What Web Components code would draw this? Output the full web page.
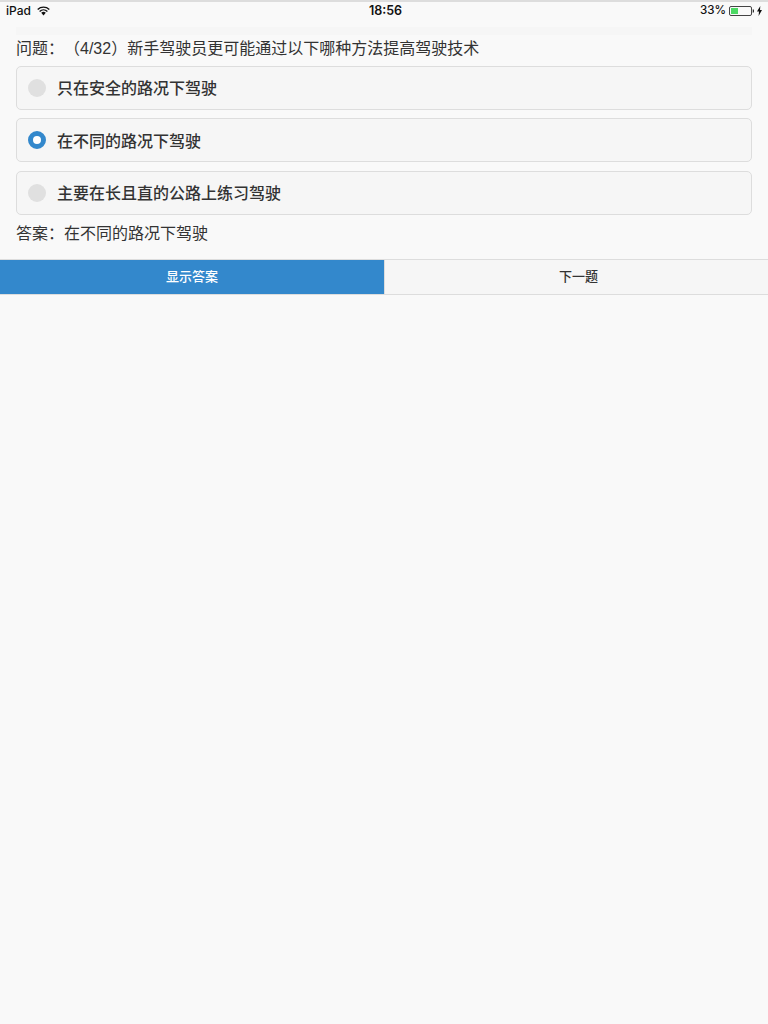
<!DOCTYPE html>
<html><head><meta charset="utf-8"><style>
html,body{margin:0;padding:0;background:#f9f9f9;}
body{width:768px;height:1024px;overflow:hidden;font-family:"Liberation Sans","Noto Sans CJK SC",sans-serif;color:#333;text-spacing-trim:space-all;}
</style></head><body>
<quiz-page>
<status-bar></status-bar>
<quiz-content>
<text-line>问题：（4/32）新手驾驶员更可能通过以下哪种方法提高驾驶技术</text-line>
<radio-option>只在安全的路况下驾驶</radio-option>
<radio-option checked>在不同的路况下驾驶</radio-option>
<radio-option>主要在长且直的公路上练习驾驶</radio-option>
<text-line answer>答案：在不同的路况下驾驶</text-line>
</quiz-content>
<button-bar><bar-button primary>显示答案</bar-button><bar-button next>下一题</bar-button></button-bar>
</quiz-page>
<script>
function def(name,html){customElements.define(name,class extends HTMLElement{constructor(){super();this.attachShadow({mode:"open"}).innerHTML=html;}});}
def("quiz-page",`<style>:host{display:block}</style><slot></slot>`);
def("status-bar",`<style>
:host{display:flex;align-items:center;justify-content:space-between;box-sizing:border-box;height:27px;border-top:2px solid #ddd;padding:0 6px 7px 6px;position:relative;font:500 12px/1 Inter,"Liberation Sans",sans-serif;color:#111}
.l,.r{display:flex;align-items:center}
.l{gap:6px}.r{gap:3px}
.r span{font-size:11.6px}
.t{position:absolute;left:3px;right:0;top:3px;text-align:center;font-size:12.5px;font-weight:600}
svg{display:block}
</style>
<div class="l"><span>iPad</span><svg width="13" height="10" viewBox="0 0 13 10"><path d="M.7 3.4A8.6 8.6 0 0 1 12.3 3.4M2.6 5.4A5.8 5.8 0 0 1 10.4 5.4" fill="none" stroke="#111" stroke-width="1.4"/><path d="M4.2 6.8A3.4 3.4 0 0 1 8.8 6.8L6.5 9.4Z" fill="#111"/></svg></div>
<div class="t">18:56</div>
<div class="r"><span>33%</span><svg width="25" height="10" viewBox="0 0 25 10"><rect x=".5" y=".5" width="22" height="9" rx="1.5" fill="none" stroke="#444"/><rect x="2" y="2" width="7" height="6" fill="#4cd964"/><path d="M23.7 3.3v3.4a1.7 1.7 0 0 0 0-3.4Z" fill="#333"/></svg><svg width="5" height="10" viewBox="0 0 5 10"><path d="M3.3 0 0 5.6h2L1.6 10 5 4H3Z" fill="#111"/></svg></div>`);
def("quiz-content",`<style>:host{display:block;padding:0 16px;height:232px;box-sizing:border-box}
.band{height:8px;background:#f6f6f6}
.list{display:flex;flex-direction:column}
</style><div class="band"></div><div class="list"><slot></slot></div>`);
def("text-line",`<style>:host{display:block;font-size:16px;line-height:30px;height:28px;margin-top:-1px;white-space:nowrap;color:#333}
:host([answer]){margin-top:0}</style><slot></slot>`);
def("radio-option",`<style>:host{display:flex;align-items:center;box-sizing:border-box;height:44px;margin:3.8px 0 4.7px;padding-bottom:1px;background:#f6f6f6;border:1px solid #ddd;border-radius:5px;padding-left:11px;font-size:16px;font-weight:500;color:#333;white-space:nowrap}
.d{width:18px;height:18px;border-radius:50%;background:#e0e0e0;margin-right:11px;box-sizing:border-box;flex:none;position:relative;top:.5px}
:host([checked]) .d{background:#fff;border:5px solid #3388cc}
</style><span class="d"></span><slot></slot>`);
def("button-bar",`<style>:host{display:flex;box-sizing:border-box;height:36px;border-top:1px solid #ddd;border-bottom:1px solid #ddd}</style><slot></slot>`);
def("bar-button",`<style>:host{flex:0 0 50%;display:flex;align-items:center;justify-content:center;box-sizing:border-box;padding-bottom:4px;background:#f6f6f6;font-size:13px;font-weight:500;color:#333}
:host(:not([primary])){border-left:1px solid #ddd}
:host([next]){padding-left:4px}
:host([primary]){background:#3388cc;color:#fff}</style><slot></slot>`);
</script>
</body></html>
